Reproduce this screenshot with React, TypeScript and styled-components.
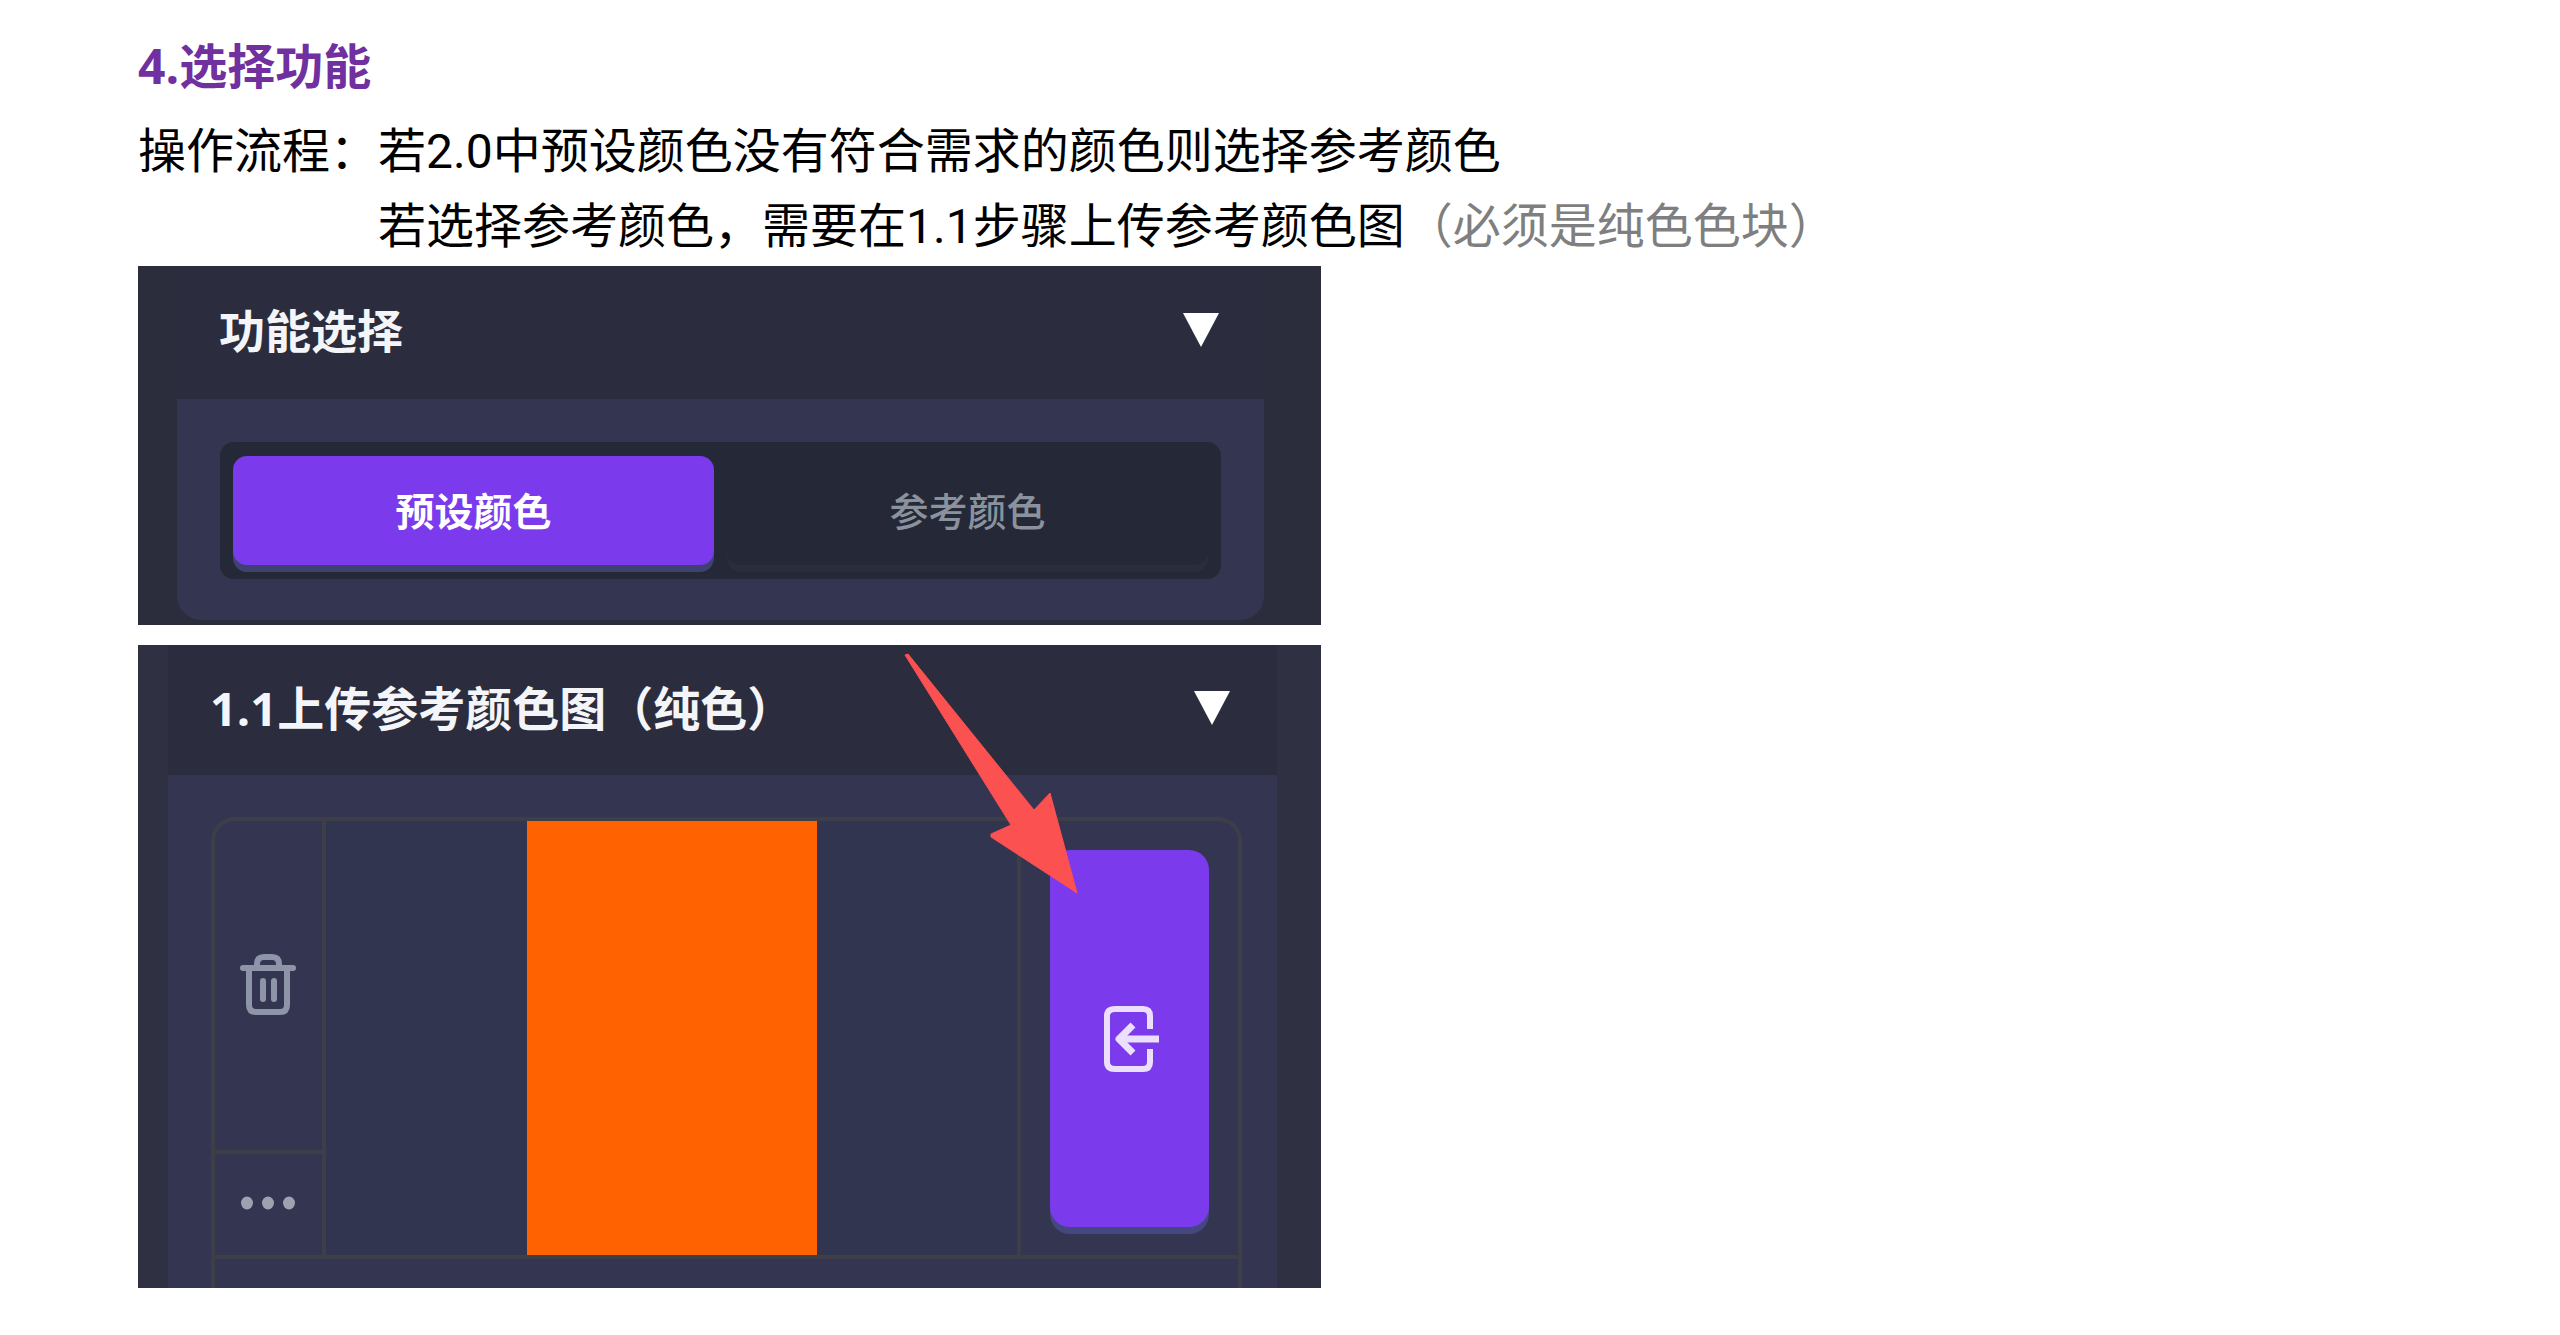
import React, { useState } from "react";
import styled, { createGlobalStyle } from "styled-components";

const GlobalStyle = createGlobalStyle`
  *, *::before, *::after { box-sizing: border-box; }
  body {
    margin: 0;
    background: #ffffff;
    color: #000000;
    font-family: "Open Sans", "Noto Sans CJK SC", sans-serif;
  }
  button { font-family: inherit; border: 0; margin: 0; padding: 0; cursor: pointer; }
`;

const Page = styled.main`
  padding: 28px 138px 47px;
`;

const Title = styled.h1`
  margin: 0 0 11px;
  color: #7030a0;
  font-size: 48px;
  line-height: 75px;
  font-weight: 700;
`;

const Steps = styled.div`
  display: grid;
  grid-template-columns: max-content 1fr;
  margin-bottom: 2px;
  font-family: Roboto, "Noto Sans CJK SC", sans-serif;
  font-size: 48px;
  line-height: 75px;
`;

const Step = styled.p`
  margin: 0;
  grid-column: 2;
`;

const StepLabel = styled.span`
  grid-column: 1;
`;

const Hint = styled.span`
  color: #7f7f7f;
`;

const Panels = styled.div`
  display: grid;
  gap: 20px;
  width: 100%;
  max-width: 1183px;
`;

const Panel = styled.section<{ $inset: string; $bg: string }>`
  position: relative;
  overflow: hidden;
  padding: ${(p) => p.$inset};
  background: ${(p) => p.$bg};
`;

const PanelHeading = styled.h2`
  margin: 0;
`;

const PanelToggle = styled.button<{ $pad: string; $size: number }>`
  display: flex;
  align-items: center;
  justify-content: space-between;
  width: 100%;
  && { padding: ${(p) => p.$pad}; }
  background: #2b2d3e;
  color: #f4f5f8;
  font-size: ${(p) => p.$size}px;
  line-height: 60px;
  font-weight: 700;
  text-align: left;
`;

const ModeBody = styled.div`
  padding: 43px 43px 41px;
  border-radius: 0 0 24px 24px;
  background: #333551;
`;

const ModeSwitch = styled.div`
  display: grid;
  grid-template-columns: 1fr 1fr;
  gap: 13px;
  padding: 14px 13px;
  border-radius: 14px;
  background: #252836;
`;

const ModeButton = styled.button<{ $active: boolean }>`
  && { padding: 30px 0; }
  border-radius: 14px;
  font-size: 39px;
  line-height: 49px;
  font-weight: ${(p) => (p.$active ? 700 : 500)};
  color: ${(p) => (p.$active ? "#ffffff" : "#8a929d")};
  background: ${(p) => (p.$active ? "#7c3aed" : "#252836")};
  box-shadow: 0 7px 0 ${(p) => (p.$active ? "#3f4270" : "#2b2d3c")};
`;

const UploadBody = styled.div`
  padding: 42px 35px 0 43px;
  background: #333551;
`;

const Frame = styled.div`
  border: 4px solid #3d3e47;
  border-bottom: 0;
  border-radius: 24px 24px 0 0;
`;

const FrameRow = styled.div`
  display: grid;
  grid-template-columns: 111px 1fr 221px;
  border-bottom: 4px solid #3d3e47;
`;

const FrameFooter = styled.div`
  height: 29px;
`;

const Tools = styled.div`
  display: flex;
  flex-direction: column;
  border-right: 4px solid #3d3e47;
`;

const ToolButton = styled.button<{ $grow?: boolean }>`
  display: flex;
  flex: ${(p) => (p.$grow ? "1 1 auto" : "0 0 105px")};
  align-items: center;
  justify-content: center;
  background: transparent;
  color: #8f95a8;
  && { padding: 0 2px 4px 0; }
  & + & { border-top: 4px solid #3d3e47; }
`;

const Preview = styled.div`
  display: flex;
  justify-content: center;
  background: #32354f;
`;

const Swatch = styled.div`
  width: 290px;
  height: 434px;
  background: #ff6200;
`;

const UploadCell = styled.div`
  display: flex;
  padding: 29px 29px 28px;
  border-left: 4px solid #3d3e47;
`;

const UploadButton = styled.button`
  display: flex;
  flex: 1;
  align-items: center;
  justify-content: center;
  border-radius: 20px;
  background: #7c3aed;
  color: #ecdffd;
  box-shadow: 0 7px 0 #454880;
`;

const Pointer = styled.svg`
  position: absolute;
  top: 8px;
  right: 243px;
  pointer-events: none;
`;

const Caret = () => (
  <svg width="36" height="34" viewBox="0 0 36 34" aria-hidden="true">
    <path d="M0 0H36L18 34Z" fill="#ffffff" />
  </svg>
);

const TrashIcon = () => (
  <svg width="56" height="64" viewBox="0 0 56 64" fill="none" stroke="currentColor" strokeWidth="6" strokeLinecap="round" strokeLinejoin="round" aria-hidden="true">
    <path d="M3 16H53" />
    <path d="M17 15V12Q17 5 24 5H32Q39 5 39 12V15" />
    <path d="M9 16V53Q9 60 16 60H40Q47 60 47 53V16" />
    <path d="M23 29V47M34 29V47" />
  </svg>
);

const MoreIcon = () => (
  <svg width="56" height="14" viewBox="0 0 56 14" fill="#9da2b0" aria-hidden="true">
    <ellipse cx="7" cy="7" rx="6" ry="6.5" />
    <ellipse cx="28" cy="7" rx="6" ry="6.5" />
    <ellipse cx="49" cy="7" rx="6" ry="6.5" />
  </svg>
);

const ImportIcon = () => (
  <svg width="62" height="70" viewBox="-4 0 62 70" fill="none" stroke="currentColor" strokeWidth="6" strokeLinejoin="round" aria-hidden="true">
    <path d="M47 25V12Q47 5 40 5H12Q4 5 4 12V58Q4 65 12 65H40Q47 65 47 58V45" />
    <path d="M56 35H16" strokeWidth="7" />
    <path d="M30 21L16 35L30 49" strokeWidth="7" />
  </svg>
);

const modes = ["预设颜色", "参考颜色"];

export default function App() {
  const [mode, setMode] = useState(modes[0]);
  const [modeOpen, setModeOpen] = useState(true);
  const [uploadOpen, setUploadOpen] = useState(true);

  return (
    <Page lang="zh-CN">
      <GlobalStyle />
      <Title>4.选择功能</Title>
      <Steps>
        <StepLabel>操作流程：</StepLabel>
        <Step>若2.0中预设颜色没有符合需求的颜色则选择参考颜色</Step>
        <Step>
          若选择参考颜色，需要在1.1步骤上传参考颜色图<Hint>（必须是纯色色块）</Hint>
        </Step>
      </Steps>

      <Panels>
        <Panel $inset="0 57px 5px 39px" $bg="#2b2d3d">
          <PanelHeading>
            <PanelToggle $size={46} $pad="34px 45px 39px 42px" aria-expanded={modeOpen} onClick={() => setModeOpen(!modeOpen)}>
              功能选择
              <Caret />
            </PanelToggle>
          </PanelHeading>
          {modeOpen && (
            <ModeBody>
              <ModeSwitch>
                {modes.map((name) => (
                  <ModeButton key={name} $active={name === mode} aria-pressed={name === mode} onClick={() => setMode(name)}>
                    {name}
                  </ModeButton>
                ))}
              </ModeSwitch>
            </ModeBody>
          )}
        </Panel>

        <Panel $inset="0 44px 0 30px" $bg="#2f3142">
          <PanelHeading>
            <PanelToggle $size={47} $pad="33px 47px 37px 42px" aria-expanded={uploadOpen} onClick={() => setUploadOpen(!uploadOpen)}>
              1.1上传参考颜色图（纯色）
              <Caret />
            </PanelToggle>
          </PanelHeading>
          {uploadOpen && (
            <UploadBody>
              <Frame>
                <FrameRow>
                  <Tools>
                    <ToolButton $grow aria-label="删除">
                      <TrashIcon />
                    </ToolButton>
                    <ToolButton aria-label="更多">
                      <MoreIcon />
                    </ToolButton>
                  </Tools>
                  <Preview>
                    <Swatch />
                  </Preview>
                  <UploadCell>
                    <UploadButton aria-label="上传">
                      <ImportIcon />
                    </UploadButton>
                  </UploadCell>
                </FrameRow>
                <FrameFooter />
              </Frame>
            </UploadBody>
          )}
          <Pointer width="174" height="241" viewBox="-1 -1 174 241" aria-hidden="true">
            <path d="M0 1L3 0L129 156L145 139L172 239L86 183V180L106 171Z" fill="#fb5151" stroke="#fb5151" strokeLinejoin="round" />
          </Pointer>
        </Panel>
      </Panels>
    </Page>
  );
}
